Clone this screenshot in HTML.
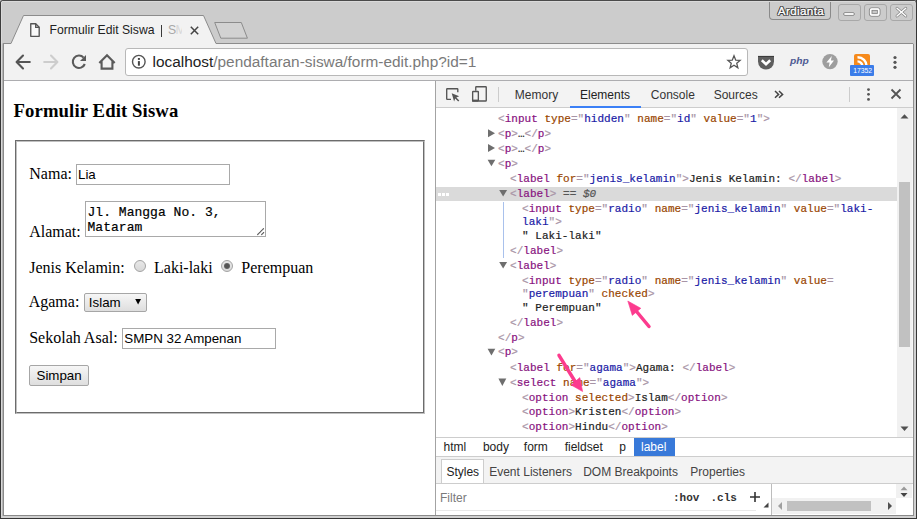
<!DOCTYPE html>
<html><head><meta charset="utf-8">
<style>
*{box-sizing:border-box}
html,body{margin:0;padding:0}
body{width:917px;height:519px;overflow:hidden;position:relative;background:#cccccc;font-family:"Liberation Sans",sans-serif}
.a{position:absolute}
.t{position:absolute;white-space:pre;line-height:1}
.serif{font-family:"Liberation Serif",serif;font-size:16px;color:#000}
.mono{font-family:"Liberation Mono",monospace;font-size:11px;letter-spacing:0.025px;-webkit-text-stroke:0.2px currentColor}
.tg{color:#881280}.br{color:#a894a6}.an{color:#994500}.av{color:#1a1aa6}.tx{color:#222}
</style></head><body>

<!-- window frame -->
<div class="a" style="left:0;top:0;width:917px;height:519px;border:1px solid #3c3c3c;border-top-color:#4a4a4a;border-radius:3px 3px 0 0"></div>
<div class="a" style="left:2px;top:1px;width:913px;height:1px;background:#dadada"></div>
<div class="a" style="left:1px;top:2px;width:1px;height:42px;background:#dadada"></div>

<!-- title bar: user + window buttons -->
<div class="a" style="left:769px;top:2px;width:62px;height:18px;border:1px solid #8a8a8a;border-top:none;border-radius:0 0 4px 4px;background:#cccccc"></div>
<div class="t" style="left:777.8px;top:5.4px;font-size:11.6px;font-weight:normal;color:#fff;letter-spacing:0.4px;-webkit-text-stroke:0.35px #fff;text-shadow:1px 0 0 #3a3a3a,-1px 0 0 #3a3a3a,0 1px 0 #3a3a3a,0 -1px 0 #3a3a3a,0.8px 0.8px 0 #3a3a3a,-0.8px -0.8px 0 #3a3a3a,0.8px -0.8px 0 #3a3a3a,-0.8px 0.8px 0 #3a3a3a">Ardianta</div>
<div class="a" style="left:837.5px;top:3.8px;width:23px;height:17px;border:1px solid #a8a8a8;border-radius:3px;background:#cccccc"></div>
<div class="a" style="left:863.5px;top:3.8px;width:23px;height:17px;border:1px solid #a8a8a8;border-radius:3px;background:#cccccc"></div>
<div class="a" style="left:889.5px;top:3.8px;width:23px;height:17px;border:1px solid #a8a8a8;border-radius:3px;background:#cccccc"></div>
<svg class="a" style="left:837px;top:0" width="80" height="22" viewBox="837 0 80 22">
  <rect x="843.6" y="12.6" width="10.8" height="2.8" rx="1.4" fill="#fff" stroke="#808080" stroke-width="0.9"/>
  <rect x="869.4" y="7.9" width="10.6" height="8.3" rx="2" fill="#c8c8c8" stroke="#808080" stroke-width="0.9"/>
  <rect x="870.6" y="9.1" width="8.2" height="5.9" rx="1.2" fill="none" stroke="#fff" stroke-width="1.5"/>
  <rect x="872.1" y="10.6" width="5.2" height="2.9" fill="#c8c8c8" stroke="#808080" stroke-width="0.7"/>
  <path d="M897 8.2L905.8 16M905.8 8.2L897 16" stroke="#808080" stroke-width="2.8" stroke-linecap="round"/>
  <path d="M897 8.2L905.8 16M905.8 8.2L897 16" stroke="#fff" stroke-width="1.5" stroke-linecap="round"/>
</svg>

<!-- tabs -->
<svg class="a" style="left:0;top:0" width="917" height="50">
  <path d="M3 43.5 L11 43.5 L23.5 15.5 L203.5 15.5 L216 43.5 L913 43.5 L913 50 L3 50 Z" fill="#f2f2f2" stroke="#8c8c8c" stroke-width="1"/>
  <path d="M214.7 22.5 L241.3 22.5 L247.4 38.2 L220.8 38.2 Z" fill="#d2d2d2" stroke="#8c8c8c" stroke-width="1" stroke-linejoin="round"/>
</svg>
<svg class="a" style="left:29px;top:23px" width="12" height="15" viewBox="0 0 12 15"><path d="M1.75 0.75 H6.7 L10.2 4.3 V13.3 H1.75 Z" fill="#fafafa" stroke="#555" stroke-width="1.35" stroke-linejoin="round"/><path d="M6.7 0.75 V4.3 H10.2" fill="none" stroke="#555" stroke-width="1.35"/></svg>
<div class="t" style="left:49.5px;top:23.6px;font-size:12.2px;color:#222">Formulir Edit Siswa</div>
<div class="a" style="left:160.5px;top:25px;width:1px;height:12px;background:#3a3a3a"></div>
<div class="t" style="left:168px;top:23.6px;font-size:12.2px;color:#a8a8a8">S</div>
<div class="t" style="left:175.5px;top:23.6px;font-size:12.2px;color:#d8d8d8;width:6px;overflow:hidden">M</div>
<svg class="a" style="left:189.5px;top:26px" width="9" height="9" viewBox="0 0 9 9"><path d="M0.8 0.8L8.2 8.2M8.2 0.8L0.8 8.2" stroke="#444" stroke-width="1.5"/></svg>

<!-- toolbar -->
<div class="a" style="left:3px;top:44px;width:910px;height:37px;background:#f2f2f2;border-left:1px solid #888;border-bottom:1px solid #adadb0"></div>
<svg class="a" style="left:14px;top:53px" width="104" height="18" viewBox="0 0 104 18">
  <path d="M15.8 9 H2.8 M9 2.6 L2.6 9 L9 15.4" fill="none" stroke="#555" stroke-width="2.1" stroke-linecap="round" stroke-linejoin="round"/>
  <path d="M30.2 9 H43.2 M37 2.6 L43.4 9 L37 15.4" fill="none" stroke="#cdcdcd" stroke-width="2.1" stroke-linecap="round" stroke-linejoin="round"/>
  <path d="M69.6 4.6 A6.2 6.2 0 1 0 70.8 11" fill="none" stroke="#5a5a5a" stroke-width="2.1"/>
  <path d="M72 2 V8 H66 Z" fill="#5a5a5a"/>
  <path d="M85.3 10 L93 2.2 L100.7 10 M87.6 8.2 V15.6 H98.4 V8.2" fill="none" stroke="#5a5a5a" stroke-width="2.1" stroke-linejoin="miter"/>
</svg>
<div class="a" style="left:125px;top:48px;width:623px;height:28px;background:#fff;border:1px solid #b8b8b8;border-radius:3px"></div>
<svg class="a" style="left:131px;top:54px" width="16" height="16" viewBox="0 0 16 16"><circle cx="7.8" cy="7.7" r="6.3" fill="none" stroke="#555" stroke-width="1.4"/><rect x="6.9" y="7.1" width="2" height="4.6" fill="#444"/><rect x="6.9" y="4" width="2" height="1.9" fill="#444"/></svg>
<div class="t" style="left:152.5px;top:54px;font-size:15.4px;color:#222">localhost<span style="color:#7a7a7a">/pendaftaran-siswa/form-edit.php?id=1</span></div>
<svg class="a" style="left:726px;top:54px" width="16" height="16" viewBox="0 0 16 16"><path d="M8 1.8 L9.75 6.2 L14.1 6.4 L10.75 9.3 L11.85 13.9 L8 11.3 L4.15 13.9 L5.25 9.3 L1.9 6.4 L6.25 6.2 Z" fill="none" stroke="#555" stroke-width="1.3" stroke-linejoin="miter"/></svg>
<svg class="a" style="left:757px;top:55px" width="18" height="15" viewBox="0 0 18 15"><path d="M1 1 H17 V6.5 A8 8 0 0 1 1 6.5 Z" fill="#5e5e5e"/><rect x="1" y="0.9" width="16" height="1.1" fill="#3c3c3c"/><path d="M4.8 5.3 L9 9.2 L13.2 5.3" fill="none" stroke="#fff" stroke-width="2.6"/></svg>
<div class="t" style="left:789.8px;top:57px;font-size:9.2px;font-weight:bold;font-style:italic;color:#4f5b93;transform:scaleX(1.12);transform-origin:0 0">php</div>
<svg class="a" style="left:821px;top:53px" width="18" height="18" viewBox="0 0 18 18"><circle cx="9" cy="8.6" r="7.7" fill="#9e9e9e"/><path d="M10.8 3 L5.4 9.6 H8.6 L7.8 14.2 L13 7.4 H9.9 Z" fill="#fff"/></svg>
<div class="a" style="left:854px;top:54px;width:16px;height:14px;background:#f68a1c;border-radius:2px"></div>
<svg class="a" style="left:854px;top:54px" width="16" height="12" viewBox="0 0 16 12"><path d="M3.5 3.2 A9 9 0 0 1 12.6 12.5 M3.5 7.4 A5 5 0 0 1 8.4 12.5" fill="none" stroke="#fff" stroke-width="2.4"/></svg>
<div class="a" style="left:850px;top:65px;width:24px;height:11px;background:#3b7de9;border-radius:1px"></div>
<div class="t" style="left:853.2px;top:67.6px;font-size:6.8px;color:#fff;letter-spacing:0px">17352</div>
<svg class="a" style="left:892px;top:55px" width="6" height="15" viewBox="0 0 6 15"><circle cx="3" cy="2.5" r="1.6" fill="#555"/><circle cx="3" cy="7.3" r="1.6" fill="#555"/><circle cx="3" cy="12.3" r="1.6" fill="#555"/></svg>

<!-- frame sides below toolbar -->
<div class="a" style="left:0;top:44px;width:1px;height:475px;background:#353535"></div>
<div class="a" style="left:1px;top:44px;width:1px;height:474px;background:#d8d8d8"></div>
<div class="a" style="left:2px;top:44px;width:1px;height:474px;background:#b4b4b4"></div>
<div class="a" style="left:3px;top:44px;width:1px;height:472px;background:#8a8a8a"></div>
<div class="a" style="left:913px;top:44px;width:1px;height:472px;background:#909090"></div>
<div class="a" style="left:914px;top:44px;width:2px;height:474px;background:#d0d0d0"></div>
<div class="a" style="left:916px;top:0;width:1px;height:519px;background:#353535"></div>
<div class="a" style="left:3px;top:515px;width:911px;height:1px;background:#8a8a8a"></div>
<div class="a" style="left:1px;top:516px;width:915px;height:2px;background:#d0d0d0"></div>
<div class="a" style="left:0;top:518px;width:917px;height:1px;background:#353535"></div>

<!-- PAGE CONTENT -->
<div class="a" id="page" style="left:4px;top:81px;width:431px;height:434px;background:#fff"></div>
<div class="t" style="left:13.5px;top:102px;font-family:'Liberation Serif',serif;font-size:18.72px;font-weight:bold;color:#000;letter-spacing:0.11px">Formulir Edit Siswa</div>
<div class="a" style="left:15px;top:140px;width:410px;height:274px;border:2px groove #c0c0c0"></div>

<div class="t serif" style="left:29.3px;top:166px">Nama:</div>
<div class="a" style="left:76px;top:164px;width:154px;height:21px;border:1px solid #a9a9a9;background:#fff"></div>
<div class="t" style="left:78px;top:168px;font-size:13.333px;color:#000">Lia</div>

<div class="t serif" style="left:29.2px;top:224px">Alamat:</div>
<div class="a" style="left:85px;top:201px;width:181px;height:36px;border:1px solid #a9a9a9;background:#fff"></div>
<div class="t mono" style="left:87.5px;top:205px;font-size:13px;line-height:15px;color:#000">Jl. Mangga No. 3,
Mataram</div>
<svg class="a" style="left:256px;top:227px" width="9" height="9" viewBox="0 0 9 9"><path d="M1.6 7.6 L7.7 1.5 M5.6 7.6 L7.7 5.5" stroke="#5a5a5a" stroke-width="1.1" stroke-dasharray="1.2 0.6" stroke-linecap="round"/></svg>

<div class="t serif" style="left:29.2px;top:260px">Jenis Kelamin:</div>
<div class="a" style="left:134px;top:260px;width:12px;height:12px;border-radius:50%;border:1px solid #a3a3a3;background:linear-gradient(#e8e8e8,#d8d8d8)"></div>
<div class="t serif" style="left:154px;top:260px">Laki-laki</div>
<div class="a" style="left:221px;top:260px;width:12px;height:12px;border-radius:50%;border:1px solid #a3a3a3;background:linear-gradient(#e8e8e8,#d8d8d8)"></div>
<div class="a" style="left:224px;top:263px;width:6px;height:6px;border-radius:50%;background:radial-gradient(#555 40%,#7a7a7a 100%)"></div>
<div class="t serif" style="left:241.3px;top:260px">Perempuan</div>

<div class="t serif" style="left:28.7px;top:294px">Agama:</div>
<div class="a" style="left:84px;top:293px;width:63px;height:19px;border:1px solid #a6a6a6;border-radius:2px;background:linear-gradient(#f6f6f6,#dedede)"></div>
<div class="t" style="left:88.8px;top:295.5px;font-size:13.333px;color:#000">Islam</div>
<svg class="a" style="left:135.3px;top:299px" width="7" height="6" viewBox="0 0 7 6"><path d="M0.2 0 H6 L3.1 5.6 Z" fill="#000"/></svg>

<div class="t serif" style="left:29.2px;top:330px">Sekolah Asal:</div>
<div class="a" style="left:122px;top:328px;width:154px;height:21px;border:1px solid #a9a9a9;background:#fff"></div>
<div class="t" style="left:124.3px;top:332px;font-size:13.333px;color:#000">SMPN 32 Ampenan</div>

<div class="a" style="left:29px;top:365px;width:60px;height:21px;border:1px solid #a6a6a6;border-radius:2px;background:linear-gradient(#f6f6f6,#dedede)"></div>
<div class="t" style="left:36.5px;top:369px;font-size:13.333px;color:#000">Simpan</div>

<!-- DEVTOOLS -->
<div class="a" id="dt" style="left:435px;top:81px;width:478px;height:434px;background:#fff;border-left:1px solid #a3a3a3"></div>
<!-- devtools toolbar -->
<div class="a" style="left:436px;top:81px;width:477px;height:27px;background:#f3f3f3;border-bottom:1px solid #cdcdcd"></div>
<svg class="a" style="left:444px;top:86px" width="48" height="18" viewBox="0 0 48 18">
  <path d="M7 13.3 H3.2 Q2.7 13.3 2.7 12.8 V3.2 Q2.7 2.7 3.2 2.7 H13.3 Q13.8 2.7 13.8 3.2 V6.2" fill="none" stroke="#555" stroke-width="1.35"/>
  <path d="M7.7 7.3 L15.2 10.3 L12.3 11.4 L15.3 14.4 L14.2 15.5 L11.2 12.5 L10.1 15.4 Z" fill="#555"/>
  <path d="M31.75 4.8 V1.3 Q31.75 0.75 32.3 0.75 H41.7 Q42.25 0.75 42.25 1.3 V14.4 Q42.25 14.95 41.7 14.95 H35" fill="none" stroke="#555" stroke-width="1.35"/>
  <rect x="28.65" y="5.45" width="5.7" height="9.5" rx="0.5" fill="#f3f3f3" stroke="#555" stroke-width="1.35"/>
  <rect x="28" y="13.6" width="7" height="2" fill="#555"/>
</svg>
<div class="a" style="left:498px;top:87px;width:1px;height:15px;background:#cccccc"></div>
<div class="t" style="left:514.8px;top:89px;font-size:12px;color:#333">Memory</div>
<div class="t" style="left:580px;top:89px;font-size:12px;color:#222">Elements</div>
<div class="a" style="left:570px;top:106px;width:71px;height:2px;background:#3b80f6"></div>
<div class="t" style="left:650.8px;top:89px;font-size:12px;color:#333">Console</div>
<div class="t" style="left:713.7px;top:89px;font-size:12px;color:#333">Sources</div>
<svg class="a" style="left:773.5px;top:89.5px" width="10" height="9" viewBox="0 0 10 9"><path d="M1 1 L4.6 4.4 L1 7.8 M5 1 L8.6 4.4 L5 7.8" fill="none" stroke="#444" stroke-width="1.5"/></svg>
<div class="a" style="left:849px;top:87px;width:1px;height:15px;background:#cccccc"></div>
<svg class="a" style="left:866px;top:87px" width="5" height="15" viewBox="0 0 5 15"><circle cx="2.5" cy="2.6" r="1.4" fill="#555"/><circle cx="2.5" cy="7.3" r="1.4" fill="#555"/><circle cx="2.5" cy="12.4" r="1.4" fill="#555"/></svg>
<svg class="a" style="left:890px;top:88px" width="12" height="12" viewBox="0 0 12 12"><path d="M1.5 1.5 L10.5 10.5 M10.5 1.5 L1.5 10.5" stroke="#555" stroke-width="1.8"/></svg>

<!-- elements tree -->
<div class="a" style="left:436px;top:187px;width:461px;height:14px;background:#dadada"></div>
<div class="a" style="left:438px;top:193px;width:2.5px;height:2.5px;background:#fff"></div><div class="a" style="left:442px;top:193px;width:2.5px;height:2.5px;background:#fff"></div><div class="a" style="left:446px;top:193px;width:2.5px;height:2.5px;background:#fff"></div>
<div class="a" style="left:503px;top:202px;width:1px;height:56px;background:#a9c1ec"></div>
<div class="mono" style="position:absolute;left:0;top:0;color:#222">
<div class="t" style="left:498px;top:114px"><span class="br">&lt;</span><span class="tg">input</span> <span class="an">type</span><span class="br">="</span><span class="av">hidden</span><span class="br">"</span> <span class="an">name</span><span class="br">="</span><span class="av">id</span><span class="br">"</span> <span class="an">value</span><span class="br">="</span><span class="av">1</span><span class="br">"&gt;</span></div>
<div class="t" style="left:498px;top:129px"><span class="br">&lt;</span><span class="tg">p</span><span class="br">&gt;</span>…<span class="br">&lt;/</span><span class="tg">p</span><span class="br">&gt;</span></div>
<div class="t" style="left:498px;top:143.5px"><span class="br">&lt;</span><span class="tg">p</span><span class="br">&gt;</span>…<span class="br">&lt;/</span><span class="tg">p</span><span class="br">&gt;</span></div>
<div class="t" style="left:498px;top:158.5px"><span class="br">&lt;</span><span class="tg">p</span><span class="br">&gt;</span></div>
<div class="t" style="left:510px;top:174px"><span class="br">&lt;</span><span class="tg">label</span> <span class="an">for</span><span class="br">="</span><span class="av">jenis_kelamin</span><span class="br">"&gt;</span>Jenis Kelamin: <span class="br">&lt;/</span><span class="tg">label</span><span class="br">&gt;</span></div>
<div class="t" style="left:510px;top:189px"><span class="br">&lt;</span><span class="tg">label</span><span class="br">&gt;</span><span style="color:#555"> == <i>$0</i></span></div>
<div class="t" style="left:522px;top:204px"><span class="br">&lt;</span><span class="tg">input</span> <span class="an">type</span><span class="br">="</span><span class="av">radio</span><span class="br">"</span> <span class="an">name</span><span class="br">="</span><span class="av">jenis_kelamin</span><span class="br">"</span> <span class="an">value</span><span class="br">="</span><span class="av">laki-</span></div>
<div class="t" style="left:522px;top:217px"><span class="av">laki</span><span class="br">"&gt;</span></div>
<div class="t" style="left:522px;top:231px">" Laki-laki"</div>
<div class="t" style="left:510px;top:246px"><span class="br">&lt;/</span><span class="tg">label</span><span class="br">&gt;</span></div>
<div class="t" style="left:510px;top:260.5px"><span class="br">&lt;</span><span class="tg">label</span><span class="br">&gt;</span></div>
<div class="t" style="left:522px;top:275.5px"><span class="br">&lt;</span><span class="tg">input</span> <span class="an">type</span><span class="br">="</span><span class="av">radio</span><span class="br">"</span> <span class="an">name</span><span class="br">="</span><span class="av">jenis_kelamin</span><span class="br">"</span> <span class="an">value</span><span class="br">=</span></div>
<div class="t" style="left:522px;top:288.5px"><span class="br">"</span><span class="av">perempuan</span><span class="br">"</span> <span class="an">checked</span><span class="br">&gt;</span></div>
<div class="t" style="left:522px;top:302.5px">" Perempuan"</div>
<div class="t" style="left:510px;top:317.6px"><span class="br">&lt;/</span><span class="tg">label</span><span class="br">&gt;</span></div>
<div class="t" style="left:498px;top:332.6px"><span class="br">&lt;/</span><span class="tg">p</span><span class="br">&gt;</span></div>
<div class="t" style="left:498px;top:347px"><span class="br">&lt;</span><span class="tg">p</span><span class="br">&gt;</span></div>
<div class="t" style="left:510px;top:362.5px"><span class="br">&lt;</span><span class="tg">label</span> <span class="an">for</span><span class="br">="</span><span class="av">agama</span><span class="br">"&gt;</span>Agama: <span class="br">&lt;/</span><span class="tg">label</span><span class="br">&gt;</span></div>
<div class="t" style="left:510px;top:377.5px"><span class="br">&lt;</span><span class="tg">select</span> <span class="an">name</span><span class="br">="</span><span class="av">agama</span><span class="br">"&gt;</span></div>
<div class="t" style="left:522px;top:392.5px"><span class="br">&lt;</span><span class="tg">option</span> <span class="an">selected</span><span class="br">&gt;</span>Islam<span class="br">&lt;/</span><span class="tg">option</span><span class="br">&gt;</span></div>
<div class="t" style="left:522px;top:407px"><span class="br">&lt;</span><span class="tg">option</span><span class="br">&gt;</span>Kristen<span class="br">&lt;/</span><span class="tg">option</span><span class="br">&gt;</span></div>
<div class="t" style="left:522px;top:422px"><span class="br">&lt;</span><span class="tg">option</span><span class="br">&gt;</span>Hindu<span class="br">&lt;/</span><span class="tg">option</span><span class="br">&gt;</span></div>
</div>
<svg class="a" style="left:486px;top:125px" width="30" height="320" viewBox="0 0 30 320">
  <path d="M2 4.3 L9 8.3 L2 12.3 Z" fill="#6e6e6e"/>
  <path d="M2 19 L9 23 L2 27 Z" fill="#6e6e6e"/>
  <path d="M1.6 34.7 L9.3 34.7 L5.45 41.2 Z" fill="#6e6e6e"/>
  <path d="M13.2 65 L21.1 65 L17.15 71.5 Z" fill="#6e6e6e"/>
  <path d="M13.2 137 L21.1 137 L17.15 143.5 Z" fill="#6e6e6e"/>
  <path d="M1.6 223.7 L9.3 223.7 L5.45 230.5 Z" fill="#6e6e6e"/>
  <path d="M12.4 253.5 L20.3 253.5 L16.35 261 Z" fill="#6e6e6e"/>
</svg>
<!-- scrollbar -->
<div class="a" style="left:897px;top:108px;width:16px;height:329px;background:#f1f1f1;border-right:1px solid #f8f8f8"></div>
<div class="a" style="left:899px;top:182px;width:11px;height:165px;background:#c1c1c1"></div>
<svg class="a" style="left:900px;top:112.5px" width="9" height="6" viewBox="0 0 9 6"><path d="M0.5 5.5 H8.5 L4.5 1.2 Z" fill="#505050"/></svg>
<svg class="a" style="left:900px;top:426px" width="9" height="6" viewBox="0 0 9 6"><path d="M0.5 0.5 H8.5 L4.5 5 Z" fill="#505050"/></svg>
<!-- pink arrows -->
<svg class="a" style="left:540px;top:285px" width="120" height="120" viewBox="540 285 120 120">
  <path d="M559 355.3 L576 383" stroke="#fc3b8e" stroke-width="3.5" stroke-linecap="round"/>
  <path d="M582.6 391.5 L571.2 385 L579.8 377.6 Z" fill="#fc3b8e" stroke="#fc3b8e" stroke-width="0.6" stroke-linejoin="round"/>
  <path d="M649 326.5 L634.5 309" stroke="#fc3b8e" stroke-width="3.5" stroke-linecap="round"/>
  <path d="M627.8 301 L640.8 308.3 L632.3 315.4 Z" fill="#fc3b8e" stroke="#fc3b8e" stroke-width="0.6" stroke-linejoin="round"/>
</svg>

<!-- breadcrumbs -->
<div class="a" style="left:436px;top:437px;width:477px;height:20px;background:#fff;border-top:1px solid #cdcdcd;border-bottom:1px solid #cdcdcd"></div>
<div class="a" style="left:634px;top:438px;width:41px;height:18px;background:#3879d9"></div>
<div class="t" style="left:443.6px;top:441px;font-size:12px;color:#222">html</div>
<div class="t" style="left:482.9px;top:441px;font-size:12px;color:#222">body</div>
<div class="t" style="left:523.8px;top:441px;font-size:12px;color:#222">form</div>
<div class="t" style="left:564.7px;top:441px;font-size:12px;color:#222">fieldset</div>
<div class="t" style="left:619.2px;top:441px;font-size:12px;color:#222">p</div>
<div class="t" style="left:641px;top:441px;font-size:12px;color:#fff">label</div>
<!-- styles tabs -->
<div class="a" style="left:436px;top:457px;width:477px;height:27px;background:#f3f3f3;border-bottom:1px solid #cdcdcd"></div>
<div class="a" style="left:441px;top:459px;width:43px;height:24px;background:#fff;border:1px solid #cdcdcd;border-bottom:none"></div>
<div class="t" style="left:446.4px;top:466px;font-size:12px;color:#222">Styles</div>
<div class="t" style="left:489.2px;top:466px;font-size:12px;color:#444">Event Listeners</div>
<div class="t" style="left:583.2px;top:466px;font-size:12px;color:#444">DOM Breakpoints</div>
<div class="t" style="left:690.3px;top:466px;font-size:12px;color:#444">Properties</div>
<!-- filter row -->
<div class="t" style="left:440px;top:491.5px;font-size:12px;color:#7a7a7a">Filter</div>
<div class="t" style="left:673px;top:492.5px;font-size:11px;font-weight:bold;font-family:'Liberation Mono',monospace;color:#333">:hov</div>
<div class="t" style="left:710.5px;top:492.5px;font-size:11px;font-weight:bold;font-family:'Liberation Mono',monospace;color:#333">.cls</div>
<svg class="a" style="left:749px;top:491px" width="12" height="12" viewBox="0 0 12 12"><path d="M6 1 V11 M1 6 H11" stroke="#333" stroke-width="1.6"/></svg>
<svg class="a" style="left:762.5px;top:501.5px" width="6" height="6" viewBox="0 0 6 6"><path d="M5.5 0.5 V5.5 H0.5 Z" fill="#444"/></svg>
<div class="a" style="left:436px;top:510px;width:320px;height:1px;background:#e8e8e8"></div>
<div class="a" style="left:771px;top:484px;width:1px;height:31px;background:#bdbdbd"></div>
<div class="a" style="left:772px;top:498px;width:124px;height:16px;background:#f1f1f1"></div>
<div class="a" style="left:787px;top:501px;width:84px;height:10px;background:#c1c1c1"></div>
<svg class="a" style="left:777px;top:501px" width="6" height="10" viewBox="0 0 6 10"><path d="M5 1 V9 L1 5 Z" fill="#a0a0a0"/></svg>
<svg class="a" style="left:887px;top:501px" width="6" height="10" viewBox="0 0 6 10"><path d="M1 1 V9 L5 5 Z" fill="#505050"/></svg>
<div class="a" style="left:896px;top:484px;width:16px;height:14px;background:#f1f1f1"></div>
<svg class="a" style="left:899px;top:485.5px" width="10" height="12" viewBox="0 0 10 12"><path d="M1.5 4.3 H8.5 L5 0.6 Z" fill="#999"/><path d="M1.5 7 H8.5 L5 11 Z" fill="#444"/></svg>

</body></html>
